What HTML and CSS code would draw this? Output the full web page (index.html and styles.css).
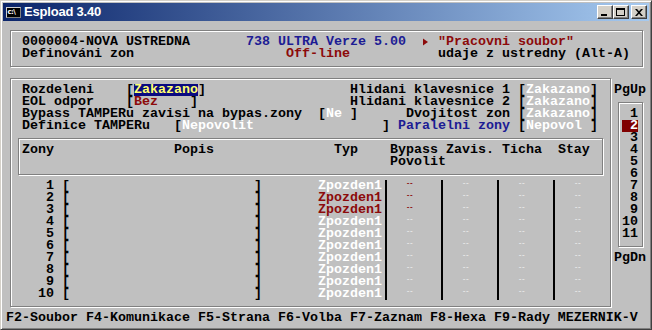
FILE: index.html
```html
<!DOCTYPE html>
<html lang="cs">
<head>
<meta charset="utf-8">
<title>Espload 3.40</title>
<link rel="stylesheet" href="styles.css">
</head>
<body>
<div class="window">
  <div class="titlebar">
    <span class="app-icon"><span class="icon-screen">c:\</span></span>
    <span class="title">Espload 3.40</span>
    <div class="caption-buttons">
      <span class="cbtn"><span class="glyph-min"></span></span>
      <span class="cbtn"><span class="glyph-max"></span></span>
      <span class="cbtn cbtn-close"><svg width="8" height="7" viewBox="0 0 8 7"><path d="M0 0h2l2 2.2 2-2.2h2L5 3.5 8 7H6L4 4.8 2 7H0l3-3.5z" fill="#000"/></svg></span>
    </div>
  </div>

  <div class="console">
    <div class="frame frame-header"></div>
    <div class="frame frame-main"></div>
    <div class="frame frame-thead"></div>
    <div class="frame frame-pages"></div>

    <div class="ln r1">0000004-NOVA USTREDNA       <span class="c-blue">738 ULTRA Verze 5.00</span>  <span class="tri"><svg width="8" height="12" viewBox="0 0 8 12"><path d="M1 2.5 L6 6 L1 9.5z" fill="#8c0a0a"/></svg></span> <span class="c-red">"Pracovni soubor"</span></div>
    <div class="ln r2">Definováni zon                   <span class="c-red">Off-line</span>           udaje z ustredny (Alt-A)</div>

    <div class="ln r5">Rozdeleni    [<span class="hl-navy">Zakazano</span>]                  Hlidani klavesnice 1 [<span class="c-white">Zakazano</span>]</div>
    <div class="ln r6">EOL odpor    [<span class="c-red">Bez</span>    ]                   Hlidani klavesnice 2 [<span class="c-white">Zakazano</span>]</div>
    <div class="ln r7">Bypass TAMPERu zavisi na bypas.zony  [<span class="c-white">Ne</span> ]      Dvojitost zon [<span class="c-white">Zakazano</span>]</div>
    <div class="ln r8">Definice TAMPERu   [<span class="c-white">Nepovolit</span>                ] <span class="c-blue">Paralelni zony</span> [<span class="c-white">Nepovol</span> ]</div>

    <div class="ln r10">Zony               Popis               Typ    Bypass Zavis. Ticha  Stay</div>
    <div class="ln r11">Povolit</div>

    <div class="ln r13">   1 [                       ]       <span class="c-white">Zpozden1</span>   <span class="dash d-red">--</span>      <span class="dash">--</span>      <span class="dash">--</span>      <span class="dash">--</span></div>
    <div class="ln r14">   2 [                       ]       <span class="c-red">Zpozden1</span>   <span class="dash d-red">--</span>      <span class="dash">--</span>      <span class="dash">--</span>      <span class="dash">--</span></div>
    <div class="ln r15">   3 [                       ]       <span class="c-red">Zpozden1</span>   <span class="dash d-red">--</span>      <span class="dash">--</span>      <span class="dash">--</span>      <span class="dash">--</span></div>
    <div class="ln r16">   4 [                       ]       <span class="c-white">Zpozden1</span>   <span class="dash">--</span>      <span class="dash">--</span>      <span class="dash">--</span>      <span class="dash">--</span></div>
    <div class="ln r17">   5 [                       ]       <span class="c-white">Zpozden1</span>   <span class="dash">--</span>      <span class="dash">--</span>      <span class="dash">--</span>      <span class="dash">--</span></div>
    <div class="ln r18">   6 [                       ]       <span class="c-white">Zpozden1</span>   <span class="dash">--</span>      <span class="dash">--</span>      <span class="dash">--</span>      <span class="dash">--</span></div>
    <div class="ln r19">   7 [                       ]       <span class="c-white">Zpozden1</span>   <span class="dash">--</span>      <span class="dash">--</span>      <span class="dash">--</span>      <span class="dash">--</span></div>
    <div class="ln r20">   8 [                       ]       <span class="c-white">Zpozden1</span>   <span class="dash">--</span>      <span class="dash">--</span>      <span class="dash">--</span>      <span class="dash">--</span></div>
    <div class="ln r21">   9 [                       ]       <span class="c-white">Zpozden1</span>   <span class="dash">--</span>      <span class="dash">--</span>      <span class="dash">--</span>      <span class="dash">--</span></div>
    <div class="ln r22">  10 [                       ]       <span class="c-white">Zpozden1</span>   <span class="dash">--</span>      <span class="dash">--</span>      <span class="dash">--</span>      <span class="dash">--</span></div>

    <div class="vsep vs1"></div>
    <div class="vsep vs2"></div>
    <div class="vsep vs3"></div>
    <div class="vsep vs4"></div>

    <div class="pg pg-up">PgUp</div>
    <div class="pages">
      <div class="page"> 1</div>
      <div class="page"><span class="hl-red"> 2</span></div>
      <div class="page"> 3</div>
      <div class="page"> 4</div>
      <div class="page"> 5</div>
      <div class="page"> 6</div>
      <div class="page"> 7</div>
      <div class="page"> 8</div>
      <div class="page"> 9</div>
      <div class="page">10</div>
      <div class="page">11</div>
    </div>
    <div class="pg pg-dn">PgDn</div>

    <div class="ln footer">F2-Soubor F4-Komunikace F5-Strana F6-Volba F7-Zaznam F8-Hexa F9-Rady MEZERNIK-V</div>
  </div>
</div>
</body>
</html>
```

FILE: styles.css
```css
* { box-sizing: border-box; }
html, body { margin: 0; padding: 0; }
body {
  width: 652px;
  height: 330px;
  overflow: hidden;
  background: #c0c0c0;
}

.window {
  width: 652px;
  height: 330px;
  padding: 2px;
  background: #c0c0c0;
  border: 1px solid;
  border-color: #d4d0c8 #404040 #404040 #d4d0c8;
  box-shadow: inset 1px 1px 0 #ffffff, inset -1px -1px 0 #808080;
}

/* ---------- title bar ---------- */
.titlebar {
  height: 18px;
  display: flex;
  align-items: center;
  padding: 0 2px;
  background: linear-gradient(to right, #0a246a, #a6caf0);
}
.app-icon {
  width: 16px;
  height: 16px;
  display: flex;
  align-items: center;
  justify-content: center;
}
.icon-screen {
  width: 15px;
  height: 11px;
  background: #000;
  border-top: 1px solid #d0d0d0;
  border-left: 1px solid #d0d0d0;
  border-right: 1px solid #808080;
  border-bottom: 1px solid #808080;
  color: #fff;
  font: bold 7px/9px "DejaVu Sans", sans-serif;
  letter-spacing: -0.6px;
  padding-left: 1px;
  overflow: hidden;
}
.title {
  margin-left: 3px;
  color: #fff;
  font: bold 13px/18px "Liberation Sans", Arial, sans-serif;
  letter-spacing: -0.2px;
  flex: 1;
}
.caption-buttons {
  display: flex;
}
.cbtn {
  width: 16px;
  height: 14px;
  background: #d4d0c8;
  border: 1px solid;
  border-color: #ffffff #404040 #404040 #ffffff;
  box-shadow: inset -1px -1px 0 #808080;
  display: flex;
  justify-content: center;
  align-items: center;
}
.cbtn-close { margin-left: 2px; }
.glyph-min {
  width: 6px;
  height: 2px;
  background: #000;
  margin-top: 6px;
  margin-right: 2px;
}
.glyph-max {
  width: 9px;
  height: 8px;
  border: 1px solid #000;
  border-top-width: 2px;
  margin-right: 1px;
}
.cbtn-close svg { display: block; margin-right: 1px; }

/* ---------- console grid 80 x 25 ---------- */
.console {
  margin: 3px 0 0 3px;
  display: grid;
  grid-template-columns: repeat(80, 8px);
  grid-template-rows: repeat(25, 12px);
  font: bold 13.333px/12px "Liberation Mono", "Courier New", monospace;
  color: #000;
}

.frame {
  border: 1px solid #808080;
  box-shadow: inset 1px 1px 0 #ffffff, 1px 1px 0 #ffffff;
  margin: 6px 3px 5px 4px;
}
.frame-header { grid-column: 1 / 81; grid-row: 1 / 5; }
.frame-main   { grid-column: 1 / 77; grid-row: 5 / 25; }
.frame-thead  { grid-column: 2 / 76; grid-row: 10 / 14; }
.frame-pages  { grid-column: 77 / 81; grid-row: 7 / 20; }

.ln { white-space: pre; grid-column: 3 / 81; }
.r1  { grid-row: 2; }
.r2  { grid-row: 3; }
.r5  { grid-row: 6; grid-column: 3 / 76; }
.r6  { grid-row: 7; grid-column: 3 / 76; }
.r7  { grid-row: 8; grid-column: 3 / 76; }
.r8  { grid-row: 9; grid-column: 3 / 76; }
.r10 { grid-row: 11; grid-column: 3 / 75; }
.r11 { grid-row: 12; grid-column: 49 / 75; }
.r13 { grid-row: 14; }
.r14 { grid-row: 15; }
.r15 { grid-row: 16; }
.r16 { grid-row: 17; }
.r17 { grid-row: 18; }
.r18 { grid-row: 19; }
.r19 { grid-row: 20; }
.r20 { grid-row: 21; }
.r21 { grid-row: 22; }
.r22 { grid-row: 23; }
.footer { grid-row: 25; grid-column: 1 / 81; }

.c-blue  { color: #1c1c94; }
.c-red   { color: #8c0a0a; }
.c-white { color: #ffffff; }

.hl-navy {
  display: inline-block;
  height: 12px;
  background: #0a0a80;
  color: #ffff70;
}
.hl-red {
  display: inline-block;
  height: 12px;
  background: #800000;
  color: #ffffff;
}

.tri { display: inline-block; width: 8px; height: 12px; vertical-align: top; }
.tri svg { display: block; }

.dash {
  display: inline-block;
  width: 8px;
  height: 12px;
  vertical-align: top;
  font-size: 7px;
  line-height: 6px;
  letter-spacing: -1px;
  color: #e6e6e6;
  overflow: hidden;
}
.d-red { color: #8c0a0a; }

.vsep {
  grid-row: 14 / 24;
  width: 2px;
  justify-self: center;
  background: #000;
}
.vs1 { grid-column: 48; }
.vs2 { grid-column: 55; }
.vs3 { grid-column: 62; }
.vs4 { grid-column: 69; }

.pg { white-space: pre; grid-column: 77 / 81; }
.pg-up { grid-row: 6; }
.pg-dn { grid-row: 20; }
.pages {
  grid-column: 78 / 80;
  grid-row: 8 / 19;
  display: flex;
  flex-direction: column;
}
.page { height: 12px; white-space: pre; }
```
